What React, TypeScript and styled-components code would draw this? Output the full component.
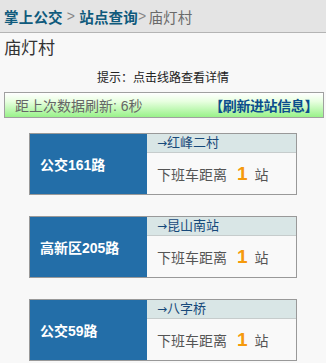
import React from 'react';
import styled, { createGlobalStyle } from 'styled-components';

interface Line {
  name: string;
  direction: string;
  stops: number;
}

const lines: Line[] = [
  { name: '公交161路', direction: '红峰二村', stops: 1 },
  { name: '高新区205路', direction: '昆山南站', stops: 1 },
  { name: '公交59路', direction: '八字桥', stops: 1 },
];

const GlobalStyle = createGlobalStyle`
  html, body {
    margin: 0;
    padding: 0;
    background: #f8f8f8;
    font-family: "Liberation Sans", "Noto Sans CJK SC", sans-serif;
  }
`;

const App: React.FC = () => {
  return (
    <Page>
      <GlobalStyle />
      <Header>
        <Crumb href="#">掌上公交</Crumb>
        <Sep>&gt;</Sep>
        <Crumb href="#">站点查询</Crumb>
        <Sep tight>&gt;</Sep>
        <Current>庙灯村</Current>
      </Header>
      <StationName>庙灯村</StationName>
      <Tip>提示：点击线路查看详情</Tip>
      <RefreshBar>
        <Elapsed>距上次数据刷新: 6秒</Elapsed>
        <RefreshLink href="#">【刷新进站信息】</RefreshLink>
      </RefreshBar>
      <List>
        {lines.map(line => (
          <Card key={line.name}>
            <LineName>{line.name}</LineName>
            <Info>
              <Direction>
                <Arrow>→</Arrow>
                {line.direction}
              </Direction>
              <Distance>
                下班车距离<Count>{line.stops}</Count>站
              </Distance>
            </Info>
          </Card>
        ))}
      </List>
    </Page>
  );
};

const Page = styled.div`
  width: 326px;
  min-height: 363px;
  background: #f8f8f8;
`;

const Header = styled.div`
  height: 32px;
  display: flex;
  align-items: center;
  padding: 0 4px;
  background: #e4e4e4;
  border-bottom: 1px solid #b4b4b4;
  font-size: 14.5px;
  letter-spacing: 0.2px;
`;

const Crumb = styled.a`
  color: #0f5a7c;
  font-weight: bold;
  text-decoration: none;
`;

const Sep = styled.span<{ tight?: boolean }>`
  color: #888;
  font-size: 14px;
  margin: ${({ tight }) => (tight ? '0 2px 0 0' : '0 4px')};
`;

const Current = styled.span`
  color: #6a6a6a;
`;

const StationName = styled.div`
  padding: 4px 4px 0;
  height: 26px;
  line-height: 24px;
  font-size: 17px;
  color: #333;
`;

const Tip = styled.div`
  text-align: center;
  font-size: 12px;
  color: #222;
  height: 20px;
  line-height: 20px;
  margin-top: 5px;
`;

const RefreshBar = styled.div`
  margin: 4px 2px 0 4px;
  height: 24px;
  display: flex;
  align-items: center;
  justify-content: space-between;
  padding: 0 5px 0 10px;
  border: 1px solid #a0a0a0;
  background: linear-gradient(to bottom, #ffffff 0%, #e8ffe0 35%, #99f28a 100%);
`;

const Elapsed = styled.span`
  font-size: 14px;
  color: #666;
`;

const RefreshLink = styled.a`
  font-size: 14px;
  font-weight: bold;
  color: #0b4d8c;
  text-decoration: none;
  letter-spacing: -0.4px;
`;

const List = styled.div`
  display: flex;
  flex-direction: column;
  gap: 21px;
  padding: 15px 0 0 29px;
`;

const Card = styled.div`
  width: 266px;
  height: 60px;
  display: flex;
  border: 1px solid #999;
  background: #f9f9f9;
`;

const LineName = styled.div`
  width: 117px;
  display: flex;
  align-items: center;
  padding-left: 10px;
  box-sizing: border-box;
  background: #236ea8;
  color: #fff;
  font-weight: bold;
  font-size: 14px;
`;

const Info = styled.div`
  flex: 1;
  display: flex;
  flex-direction: column;
`;

const Direction = styled.div`
  height: 18px;
  line-height: 18px;
  padding-left: 10px;
  background: #d9e6e6;
  border-bottom: 1px solid #c6cccc;
  color: #17497a;
  font-size: 13px;
`;

const Arrow = styled.span`
  font-family: "DejaVu Sans", sans-serif;
  font-size: 12px;
`;

const Distance = styled.div`
  flex: 1;
  display: flex;
  align-items: center;
  padding-left: 10px;
  font-size: 14px;
  color: #555;
`;

const Count = styled.span`
  font-size: 19px;
  font-weight: bold;
  color: #f59a0c;
  margin: 0 7px 0 10px;
`;

export default App;
